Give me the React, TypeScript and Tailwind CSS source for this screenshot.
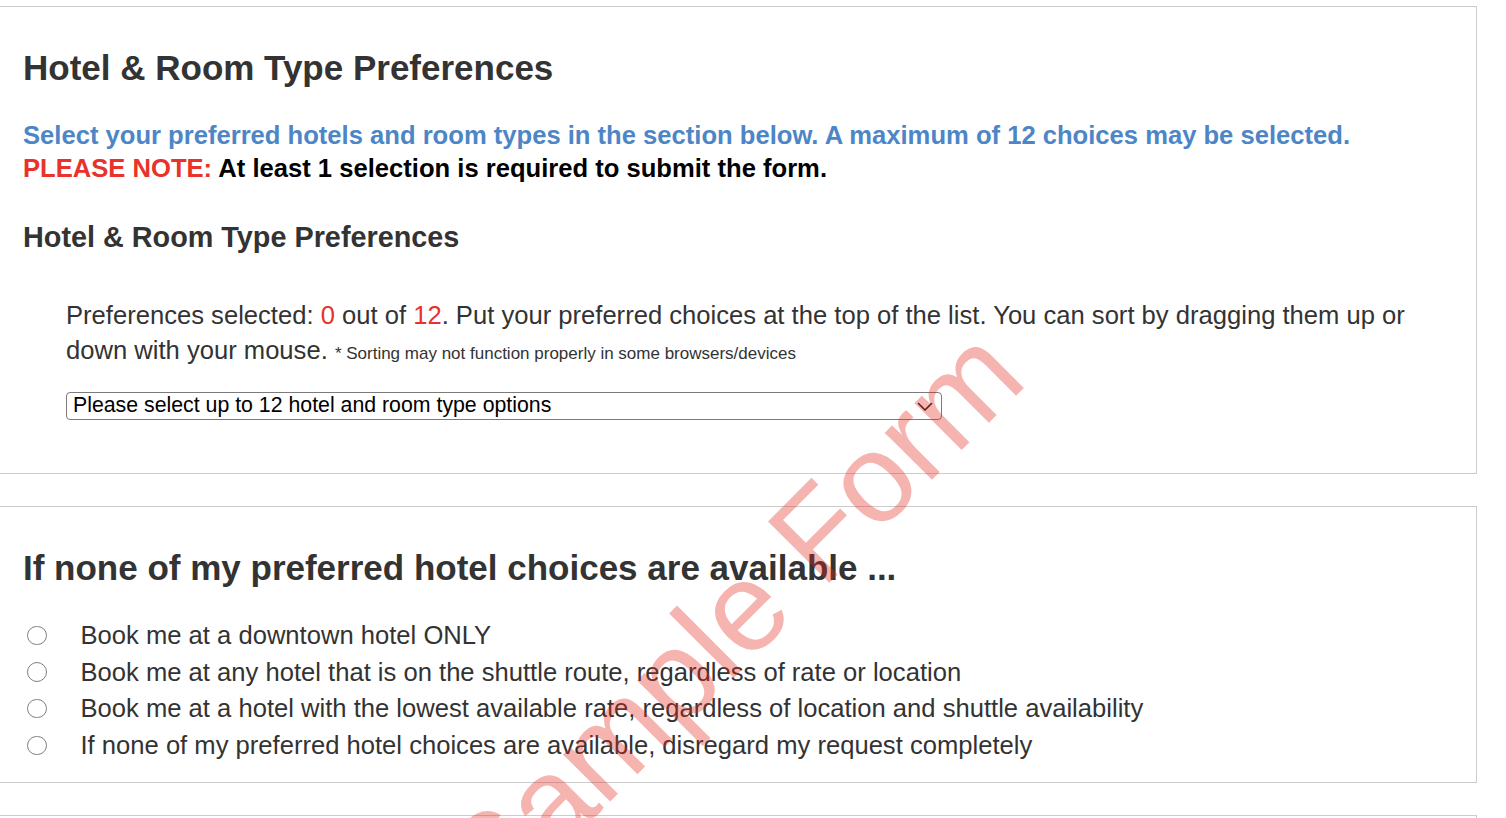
import React from "react";

const radios = [
  "Book me at a downtown hotel ONLY",
  "Book me at any hotel that is on the shuttle route, regardless of rate or location",
  "Book me at a hotel with the lowest available rate, regardless of location and shuttle availability",
  "If none of my preferred hotel choices are available, disregard my request completely",
];

export default function App() {
  return (
    <div
      className="relative min-h-[818px] w-[1506px] overflow-hidden bg-white text-[#333]"
      style={{ fontFamily: '"Liberation Sans", Arial, Helvetica, sans-serif' }}
    >
      <div className="pt-[6px]">
        {/* Card 1 */}
        <div className="-ml-px w-[1478px] border border-[#cccccc] pl-[23px] pr-[23px] pb-[53px]">
          <h1 className="mt-[41px] text-[35px] font-bold leading-[40px] text-[#333]">
            Hotel &amp; Room Type Preferences
          </h1>
          <div className="mt-[31px] text-[25.6px] font-bold leading-[33px]">
            <div className="text-[#4d86c6]">
              Select your preferred hotels and room types in the section below. A maximum of 12 choices may be selected.
            </div>
            <div className="text-black">
              <span className="text-[#e8322a]">PLEASE NOTE:</span> At least 1 selection is required to submit the form.
            </div>
          </div>
          <h3 className="mt-[35px] text-[28.8px] font-bold leading-[34px] text-[#333]">
            Hotel &amp; Room Type Preferences
          </h3>
          <div className="pl-[43px]">
            <p className="mt-[44px] text-[25.6px] leading-[35px] text-[#333]">
              Preferences selected: <span className="text-[#e8322a]">0</span> out of{" "}
              <span className="text-[#e8322a]">12</span>. Put your preferred choices at the top of the list. You can sort
              by dragging them up or down with your mouse.{" "}
              <span className="text-[17px]">* Sorting may not function properly in some browsers/devices</span>
            </p>
            <div className="mt-[21px] flex h-[28px] w-[876px] items-center justify-between rounded-[4px] border border-[#7b7b7b] pl-[6px] pr-[8px]">
              <span className="text-[21.3px] leading-none text-black">
                Please select up to 12 hotel and room type options
              </span>
              <svg width="16" height="10" viewBox="0 0 16 10" className="mt-[1px]">
                <path d="M1.5 1.5 L8 8 L14.5 1.5" fill="none" stroke="#1a1a1a" strokeWidth="1.6" strokeLinecap="round" strokeLinejoin="round" />
              </svg>
            </div>
          </div>
        </div>

        {/* Card 2 */}
        <div className="-ml-px mt-[32px] w-[1478px] border border-[#cccccc] pl-[23px] pr-[23px] pb-[18px]">
          <h2 className="mt-[41px] text-[35px] font-bold leading-[40px] text-[#333]">
            If none of my preferred hotel choices are available ...
          </h2>
          <div className="mt-[29px]">
            {radios.map((r) => (
              <div key={r} className="flex h-[36.67px] items-center text-[25.6px] leading-[36.67px] text-[#333]">
                <span className="ml-[4px] mr-[34px] box-border block h-[19.5px] w-[19.5px] rounded-full border-[1.5px] border-[#808080]" />
                <span>{r}</span>
              </div>
            ))}
          </div>
        </div>

        {/* Card 3 */}
        <div className="-ml-px mt-[32px] h-[200px] w-[1478px] border border-[#cccccc]" />
      </div>

      {/* Watermark */}
      <div className="pointer-events-none absolute left-[732px] top-[619px] -translate-x-1/2 -translate-y-1/2 -rotate-45 whitespace-nowrap text-[126px] leading-none text-[rgba(230,40,30,0.35)]">
        Sample Form
      </div>
    </div>
  );
}
